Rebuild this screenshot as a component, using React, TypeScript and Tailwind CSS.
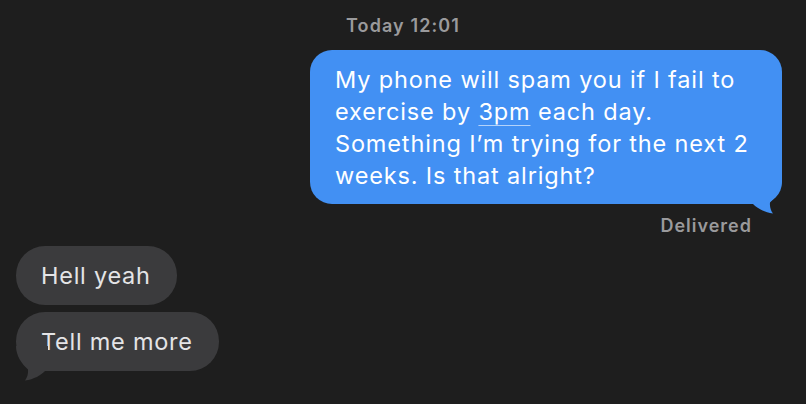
import React from "react";

const FONT = { fontFamily: "Inter, 'Noto Sans', sans-serif" };

function Tail({ color, flip }: { color: string; flip?: boolean }) {
  return (
    <svg
      width="32"
      height="35"
      viewBox="0 0 32 35"
      className={
        flip
          ? "absolute left-0 bottom-[-10px] -scale-x-100"
          : "absolute right-0 bottom-[-10px]"
      }
    >
      <path
        d="M0,0 H32 C32,10 26,18 20,23.5 C19.5,28 21,32 23,34.5 C14,33.5 7,29 3,25 H0 Z"
        fill={color}
      />
    </svg>
  );
}

export default function App() {
  return (
    <div
      className="w-full h-[404px] bg-[#1e1e1e] flex flex-col overflow-hidden antialiased"
      style={FONT}
    >
      <div className="pt-[16px] text-center text-[18px] leading-[20px] font-semibold tracking-[1.1px] text-[#9a9a9c]">
        Today 12:01
      </div>

      <div className="flex justify-end pr-[24px] mt-[14px]">
        <div className="relative w-[472px] rounded-[22px] bg-[#4290f3] pl-[25px] pt-[14px] pb-[12px] text-white text-[23.5px] tracking-[0.85px] leading-[32px]">
          My phone will spam you if I fail to
          <br />
          exercise by{" "}
          <span className="underline decoration-1 decoration-white/60 underline-offset-[5px]">
            3pm
          </span>{" "}
          each day.
          <br />
          Something I’m trying for the next 2
          <br />
          weeks. Is that alright?
          <Tail color="#4290f3" />
        </div>
      </div>

      <div className="pr-[54px] mt-[12px] text-right text-[18px] leading-[20px] font-semibold tracking-[1px] text-[#9a9a9c]">
        Delivered
      </div>

      <div className="flex flex-col items-start gap-[7px] pl-4 mt-[10px]">
        <div className="h-[59px] flex items-center rounded-[29px] bg-[#3b3b3d] pl-[25px] pr-[26px] text-[#e4e4e6] text-[23.5px] tracking-[0.75px]">
          Hell yeah
        </div>
        <div className="relative h-[59px] flex items-center rounded-[29px] bg-[#3b3b3d] pl-[25px] pr-[26px] text-[#e4e4e6] text-[23.5px] tracking-[0.75px]">
          Tell me more
          <Tail color="#3b3b3d" flip />
        </div>
      </div>
    </div>
  );
}
